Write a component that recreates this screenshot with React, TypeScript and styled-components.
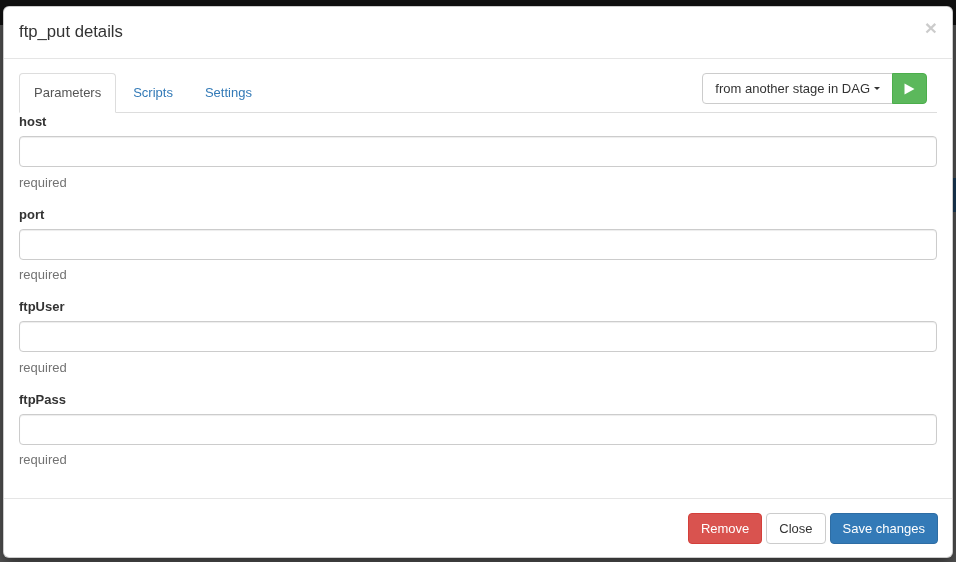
import React from "react";
import styled, { createGlobalStyle, css } from "styled-components";

const GlobalStyle = createGlobalStyle`
  html, body {
    margin: 0;
    padding: 0;
    height: 100%;
    overflow: hidden;
  }
  body {
    font-family: "Liberation Sans", Arial, Helvetica, sans-serif;
    font-size: 13px;
    color: #333;
    background: #555;
  }
  *, *::before, *::after { box-sizing: border-box; }
`;

const Page = styled.div`
  min-height: 100vh;
  display: flex;
  flex-direction: column;
  background: #555;
`;

const NavBar = styled.div`
  height: 25px;
  background: #111;
`;

const PageContent = styled.div`
  flex: 1;
  display: flex;
  flex-direction: column;
  align-items: flex-end;
  padding-top: 153px;
`;

const Banner = styled.div`
  width: 60px;
  height: 34px;
  background: #1b3c5a;
`;

const Overlay = styled.div`
  position: fixed;
  inset: 0;
  display: flex;
  justify-content: center;
  align-items: flex-start;
  padding-top: 6px;
`;

const Dialog = styled.div`
  width: 950px;
  background: #fff;
  border: 1px solid rgba(0, 0, 0, 0.2);
  border-radius: 6px;
  box-shadow: 0 5px 15px rgba(0, 0, 0, 0.5);
  display: flex;
  flex-direction: column;
`;

const Header = styled.div`
  display: flex;
  justify-content: space-between;
  align-items: flex-start;
  padding: 14px 15px 16px;
  border-bottom: 1px solid #e5e5e5;
`;

const Title = styled.h4`
  margin: 0;
  font-size: 16.7px;
  line-height: 21px;
  font-weight: 400;
  color: #333;
`;

const CloseX = styled.button`
  background: none;
  border: 0;
  padding: 0;
  margin-top: -4px;
  font-family: "Liberation Sans", Arial, sans-serif;
  font-size: 21px;
  font-weight: bold;
  line-height: 1;
  color: #000;
  opacity: 0.2;
  cursor: pointer;
`;

const Body = styled.div`
  padding: 14px 15px 15px;
`;

const TabsRow = styled.div`
  display: flex;
  justify-content: space-between;
  align-items: flex-start;
  border-bottom: 1px solid #ddd;
`;

const TabList = styled.ul`
  display: flex;
  list-style: none;
  margin: 0 0 -1px;
  padding: 0;
`;

const TabItem = styled.li`
  margin-right: 2px;
`;

const TabLink = styled.a<{ $active?: boolean }>`
  display: block;
  padding: 10px 14px;
  line-height: 18px;
  border: 1px solid transparent;
  border-radius: 4px 4px 0 0;
  color: #337ab7;
  text-decoration: none;
  cursor: pointer;
  ${(p) =>
    p.$active &&
    css`
      color: #555;
      background: #fff;
      border-color: #ddd #ddd transparent;
    `}
`;

const BtnGroup = styled.div`
  display: flex;
  margin-right: 10px;
`;

const SourceButton = styled.button`
  height: 31px;
  padding: 0 12px;
  font-family: inherit;
  font-size: 13px;
  color: #333;
  background: #fff;
  border: 1px solid #ccc;
  border-radius: 4px 0 0 4px;
  display: flex;
  align-items: center;
`;

const Caret = styled.span`
  display: inline-block;
  width: 0;
  height: 0;
  margin-left: 4px;
  border-top: 3px solid #333;
  border-left: 3px solid transparent;
  border-right: 3px solid transparent;
`;

const RunButton = styled.button`
  width: 35px;
  height: 31px;
  padding: 0;
  margin-left: -1px;
  background: #5cb85c;
  border: 1px solid #4cae4c;
  border-radius: 0 4px 4px 0;
  display: flex;
  align-items: center;
  justify-content: center;
`;

const FormGroup = styled.div`
  display: flex;
  flex-direction: column;
`;

const Label = styled.label`
  font-weight: bold;
  line-height: 17px;
  margin-bottom: 6px;
  color: #333;
`;

const Input = styled.input`
  width: 100%;
  height: 31px;
  padding: 6px 12px;
  font-family: inherit;
  font-size: 13px;
  color: #555;
  background: #fff;
  border: 1px solid #ccc;
  border-radius: 4px;
  box-shadow: inset 0 1px 1px rgba(0, 0, 0, 0.075);
  outline: none;
`;

const Help = styled.span`
  display: block;
  margin-top: 6.5px;
  margin-bottom: 15px;
  line-height: 17px;
  color: #737373;
`;

const Footer = styled.div`
  display: flex;
  justify-content: flex-end;
  gap: 4px;
  padding: 14px 14px 13px 15px;
  border-top: 1px solid #e5e5e5;
`;

type Variant = "danger" | "default" | "primary";

const variants: Record<Variant, ReturnType<typeof css>> = {
  danger: css`
    color: #fff;
    background: #d9534f;
    border-color: #d43f3a;
  `,
  default: css`
    color: #333;
    background: #fff;
    border-color: #ccc;
  `,
  primary: css`
    color: #fff;
    background: #337ab7;
    border-color: #2e6da4;
  `,
};

const FooterButton = styled.button<{ $variant: Variant }>`
  height: 31px;
  padding: 0 12px;
  font-family: inherit;
  font-size: 13px;
  line-height: 29px;
  border: 1px solid;
  border-radius: 4px;
  cursor: pointer;
  ${(p) => variants[p.$variant]}
`;

const fields = ["host", "port", "ftpUser", "ftpPass"];

export default function App() {
  return (
    <>
      <GlobalStyle />
      <Page>
        <NavBar />
        <PageContent>
          <Banner />
        </PageContent>
      </Page>
      <Overlay>
        <Dialog>
          <Header>
            <Title>ftp_put details</Title>
            <CloseX aria-label="Close">×</CloseX>
          </Header>
          <Body>
            <TabsRow>
              <TabList>
                <TabItem>
                  <TabLink $active>Parameters</TabLink>
                </TabItem>
                <TabItem>
                  <TabLink>Scripts</TabLink>
                </TabItem>
                <TabItem>
                  <TabLink>Settings</TabLink>
                </TabItem>
              </TabList>
              <BtnGroup>
                <SourceButton>
                  from another stage in DAG
                  <Caret />
                </SourceButton>
                <RunButton aria-label="Run">
                  <svg width="11" height="12" viewBox="0 0 11 12">
                    <polygon points="0.5,0.5 10.5,6 0.5,11.5" fill="#fff" />
                  </svg>
                </RunButton>
              </BtnGroup>
            </TabsRow>
            {fields.map((f) => (
              <FormGroup key={f}>
                <Label>{f}</Label>
                <Input type="text" />
                <Help>required</Help>
              </FormGroup>
            ))}
          </Body>
          <Footer>
            <FooterButton $variant="danger">Remove</FooterButton>
            <FooterButton $variant="default">Close</FooterButton>
            <FooterButton $variant="primary">Save changes</FooterButton>
          </Footer>
        </Dialog>
      </Overlay>
    </>
  );
}
